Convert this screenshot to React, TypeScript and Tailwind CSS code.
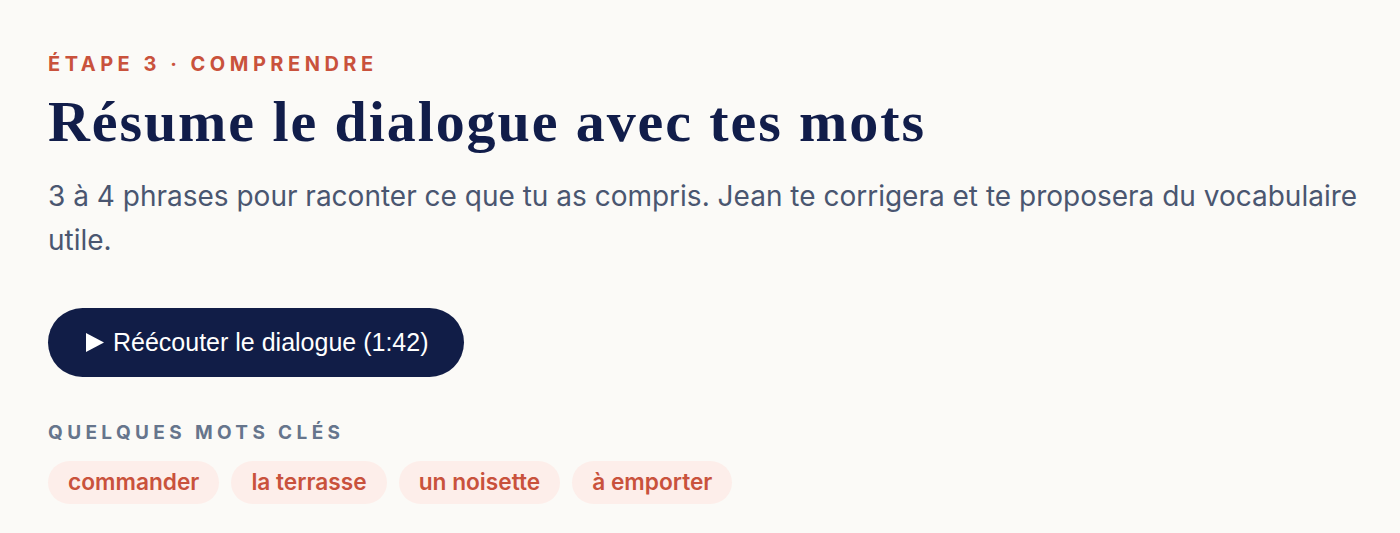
const keywords = ['commander', 'la terrasse', 'un noisette', 'à emporter']

export default function App() {
  return (
    <div className="min-h-[533px] bg-[#fbfaf7] pl-12 pr-9 pt-[52px] font-['Inter','Noto_Sans',sans-serif]">
      {/* Step label */}
      <p className="text-[20px] font-bold leading-6 tracking-[0.225em] text-[#c9523c]">
        ÉTAPE 3 · COMPRENDRE
      </p>

      <h1 className="mt-[14px] font-['Liberation_Serif',serif] text-[58px] font-bold leading-[64px] tracking-[0.033em] text-[#111d4a]">
        Résume le dialogue avec tes mots
      </h1>

      <p className="mt-[20px] text-[28px] leading-[44px] text-[#4a5670]">
        3 à 4 phrases pour raconter ce que tu as compris. Jean te corrigera et te proposera du vocabulaire utile.
      </p>

      <button className="mt-[46px] flex h-[69px] items-center gap-[9px] rounded-full bg-[#111d47] pl-[38px] pr-9 font-['Liberation_Sans',sans-serif] text-[25px] text-white">
        <svg width="18" height="19" viewBox="0 0 18 19" className="shrink-0">
          <polygon points="0,0 18,9.5 0,19" fill="white" />
        </svg>
        Réécouter le dialogue (1:42)
      </button>

      {/* Keywords */}
      <p className="mt-[44px] text-[19px] font-bold leading-6 tracking-[0.23em] text-[#66758c]">
        QUELQUES MOTS CLÉS
      </p>
      <div className="mt-[16px] flex flex-wrap gap-3">
        {keywords.map((k) => (
          <span
            key={k}
            className="flex h-[43px] items-center rounded-full bg-[#fdeeea] px-5 text-[22.7px] font-semibold text-[#c9523c]"
          >
            {k}
          </span>
        ))}
      </div>
    </div>
  )
}
